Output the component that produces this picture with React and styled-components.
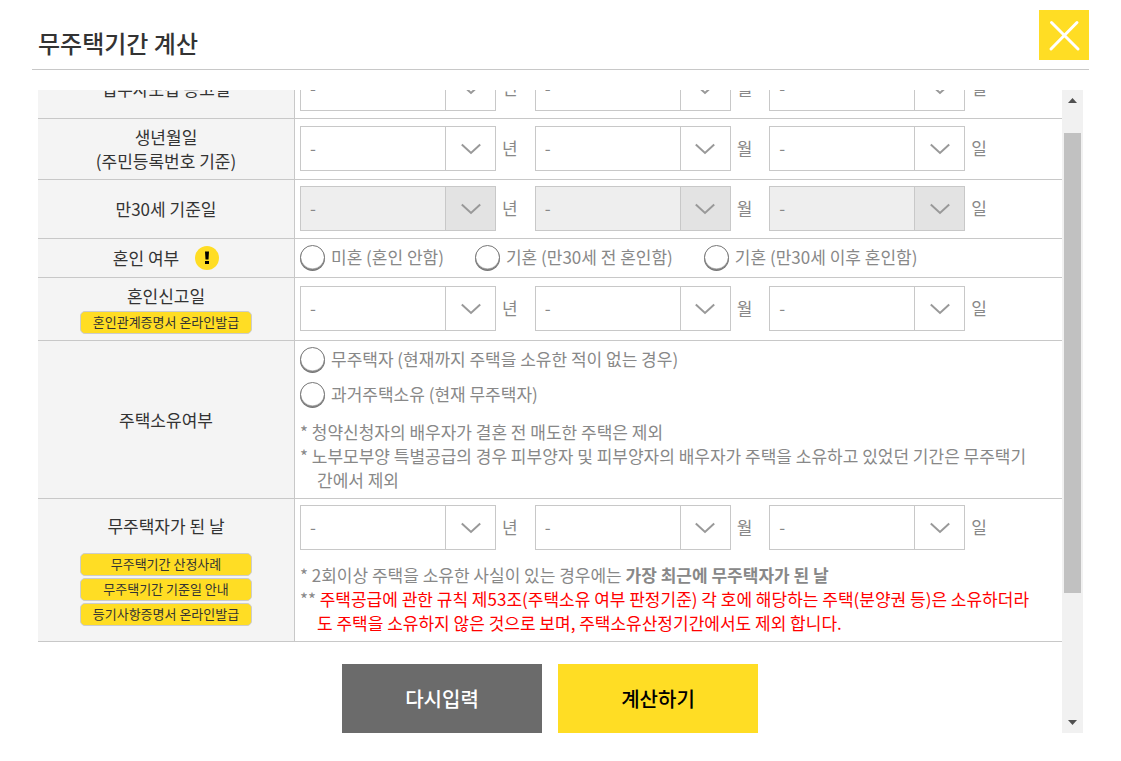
import React, { useLayoutEffect, useRef, useState } from 'react'
import styled, { createGlobalStyle, css } from 'styled-components'

const YELLOW = '#ffdd24'
const LINE = '#c8c8c8'
const FONT = '"Noto Sans CJK KR", "Noto Sans", sans-serif'

const GlobalStyle = createGlobalStyle`
  * {
    box-sizing: border-box;
  }

  body {
    margin: 0;
    background: #fff;
    color: #888;
    font: 17px/24px ${FONT};
  }

  button, select, input {
    font-family: inherit;
  }
`

const Popup = styled.div`
  display: flex;
  flex-direction: column;
  height: 100vh;
  padding: 0 32px 28px;
`

const Header = styled.header`
  display: flex;
  align-items: center;
  justify-content: space-between;
  height: 70px;
  padding-left: 6px;
  border-bottom: 1px solid ${LINE};
`

const Title = styled.h1`
  margin: 16px 0 0;
  font-size: 24px;
  font-weight: 500;
  line-height: 32px;
  color: #333;
`

const CloseButton = styled.button`
  display: flex;
  width: 50px;
  height: 50px;
  padding: 0;
  border: 0;
  background: ${YELLOW};
  cursor: pointer;
`

const Body = styled.div`
  display: flex;
  flex: 1;
  min-height: 0;
  margin: 20px 6px 0;
`

const ScrollArea = styled.div`
  flex: 1;
  overflow-y: auto;
  scrollbar-width: none;
`

const Content = styled.form`
  padding-bottom: 166px;
`

const Table = styled.table`
  width: 100%;
  table-layout: fixed;
  border-spacing: 0;
  border-top: 1px solid ${LINE};
`

const LabelCell = styled.th`
  width: 257px;
  padding: 6px 5px;
  border-right: 1px solid ${LINE};
  border-bottom: 1px solid ${LINE};
  background: #f4f4f4;
  color: #333;
  font-weight: 400;
`

const LabelLine = styled.div`
  display: flex;
  align-items: center;
  justify-content: center;
  gap: 16px;
`

const Cell = styled.td`
  padding: 6px 5px;
  border-bottom: 1px solid ${LINE};
`

const DateRow = styled.div`
  display: flex;
  height: 46px;
`

const DateField = styled.label`
  display: flex;
  flex: 0 0 31%;
`

const Unit = styled.span`
  margin: 0 17px 0 6px;
  line-height: 44px;
`

const SelectBox = styled.span`
  display: grid;
  flex: 1;
  height: 45px;
`

const Select = styled.select`
  grid-area: 1 / 1;
  width: 100%;
  padding: 0 60px 2px 9px;
  border: 1px solid ${LINE};
  border-radius: 0;
  appearance: none;
  background: #fff;
  color: #888;
  font-size: 17px;

  &:disabled {
    background: #eee;
    opacity: 1;
  }
`

const Arrow = styled.span`
  grid-area: 1 / 1;
  z-index: 1;
  justify-self: end;
  display: flex;
  align-items: center;
  justify-content: center;
  width: 51px;
  border: 1px solid ${LINE};
  pointer-events: none;
  ${props => props.$disabled && css`
    background: #e3e3e3;
  `}
`

const RadioGroup = styled.div`
  display: flex;
  flex-direction: ${props => props.$vertical ? 'column' : 'row'};
  gap: ${props => props.$vertical ? '9px' : '31px'};
`

const RadioLabel = styled.label`
  display: flex;
  gap: 6px;
  height: 26px;
  white-space: nowrap;
`

const Radio = styled.input`
  width: 25px;
  height: 25px;
  margin: 0;
  border: 1px solid #777;
  border-radius: 50%;
  box-shadow: 0 1px 0 #777, inset 0 -1px 0 #ccc;
  appearance: none;
  background: #fff;

  &:checked {
    background: radial-gradient(${YELLOW} 50%, #fff 54%);
  }
`

const Notes = styled.ul`
  margin: 12px 0 0;
  padding: 0;
  list-style: none;
`

const Note = styled.li`
  padding: 0 17px;
  text-indent: -17px;
  word-break: break-all;
`

const Warning = styled.span`
  color: #f00;
`

const LinkList = styled.div`
  display: flex;
  flex-direction: column;
  align-items: center;
  gap: 2px;
  margin-top: ${props => props.$spaced ? '15px' : '3px'};
`

const SmallButton = styled.button`
  width: 172px;
  height: 23px;
  padding: 0 0 2px;
  border: 1px solid #ccc;
  border-radius: 5px;
  background: ${YELLOW};
  color: #333;
  font-size: 13px;
  line-height: 19px;
  cursor: pointer;
`

const InfoButton = styled.button`
  display: flex;
  width: 24px;
  height: 24px;
  padding: 0;
  border: 0;
  background: none;
  cursor: pointer;
`

const Actions = styled.div`
  display: flex;
  justify-content: center;
  gap: 16px;
  margin-top: 22px;
`

const ActionButton = styled.button`
  width: 200px;
  height: 69px;
  border: 0;
  background: #6b6b6b;
  color: #fff;
  font-size: 20px;
  font-weight: 500;
  cursor: pointer;

  ${props => props.$primary && css`
    background: ${YELLOW};
    color: #000;
  `}
`

const ScrollBar = styled.div`
  display: flex;
  flex-direction: column;
  width: 21px;
  background: #f1f1f1;
`

const ScrollButton = styled.button`
  display: flex;
  align-items: center;
  justify-content: center;
  height: 21px;
  padding: 0;
  border: 0;
  background: none;
`

const Track = styled.div`
  flex: 1;
  min-height: 0;
  padding: 0 2px;
  overflow: hidden;
`

const Thumb = styled.div`
  background: #c1c1c1;
`

const DateSelects = ({ name, disabled }) => (
  <DateRow>
    {['년', '월', '일'].map(unit => (
      <DateField key={unit}>
        <SelectBox>
          <Select name={`${name}-${unit}`} disabled={disabled}>
            <option>-</option>
          </Select>
          <Arrow $disabled={disabled}>
            <svg width='20' height='12' viewBox='0 0 20 12' fill='none' stroke='#999' strokeWidth='2'>
              <path d='M0.8 1.5L10 10L19.2 1.5' />
            </svg>
          </Arrow>
        </SelectBox>
        <Unit>{unit}</Unit>
      </DateField>
    ))}
  </DateRow>
)

const Radios = ({ name, options, vertical }) => (
  <RadioGroup $vertical={vertical}>
    {options.map(option => (
      <RadioLabel key={option}>
        <Radio type='radio' name={name} value={option} />
        {option}
      </RadioLabel>
    ))}
  </RadioGroup>
)

const App = () => {
  const area = useRef(null)
  const [scroll, setScroll] = useState({ size: 0, offset: 0 })

  const updateScroll = () => {
    const { scrollTop, scrollHeight, clientHeight } = area.current
    setScroll({
      size: clientHeight / scrollHeight * 100,
      offset: scrollTop / scrollHeight * (clientHeight - 42)
    })
  }

  const scrollBy = amount => {
    area.current.scrollTop += amount
  }

  useLayoutEffect(() => {
    area.current.scrollTop = 31
    updateScroll()
  }, [])

  return (
    <Popup>
      <GlobalStyle />
      <Header>
        <Title>무주택기간 계산</Title>
        <CloseButton type='button' aria-label='닫기'>
          <svg width='50' height='50' viewBox='0 0 50 50' stroke='#fff' strokeWidth='3' strokeLinecap='round'>
            <path d='M12.5 12.5L39 39M38 12.5L12 39' />
          </svg>
        </CloseButton>
      </Header>
      <Body>
        <ScrollArea ref={area} onScroll={updateScroll}>
          <Content onSubmit={e => e.preventDefault()}>
            <Table>
              <tbody>
                <tr>
                  <LabelCell scope='row'>입주자모집 공고일</LabelCell>
                  <Cell><DateSelects name='notice' /></Cell>
                </tr>
                <tr>
                  <LabelCell scope='row'>생년월일<br />(주민등록번호 기준)</LabelCell>
                  <Cell><DateSelects name='birth' /></Cell>
                </tr>
                <tr>
                  <LabelCell scope='row'>만30세 기준일</LabelCell>
                  <Cell><DateSelects name='age30' disabled /></Cell>
                </tr>
                <tr>
                  <LabelCell scope='row'>
                    <LabelLine>
                      혼인 여부
                      <InfoButton type='button' aria-label='안내'>
                        <svg width='24' height='24' viewBox='0 0 24 24'>
                          <circle cx='12' cy='12' r='12' fill={YELLOW} />
                          <path d='M10 5.5h4l-.5 8h-3zM10 15h4v3h-4z' />
                        </svg>
                      </InfoButton>
                    </LabelLine>
                  </LabelCell>
                  <Cell>
                    <Radios
                      name='marriage'
                      options={['미혼 (혼인 안함)', '기혼 (만30세 전 혼인함)', '기혼 (만30세 이후 혼인함)']}
                    />
                  </Cell>
                </tr>
                <tr>
                  <LabelCell scope='row'>
                    혼인신고일
                    <LinkList>
                      <SmallButton type='button'>혼인관계증명서 온라인발급</SmallButton>
                    </LinkList>
                  </LabelCell>
                  <Cell><DateSelects name='wedding' /></Cell>
                </tr>
                <tr>
                  <LabelCell scope='row'>주택소유여부</LabelCell>
                  <Cell>
                    <Radios
                      vertical
                      name='house'
                      options={['무주택자 (현재까지 주택을 소유한 적이 없는 경우)', '과거주택소유 (현재 무주택자)']}
                    />
                    <Notes>
                      <Note>* 청약신청자의 배우자가 결혼 전 매도한 주택은 제외</Note>
                      <Note>* 노부모부양 특별공급의 경우 피부양자 및 피부양자의 배우자가 주택을 소유하고 있었던 기간은 무주택기간에서 제외</Note>
                    </Notes>
                  </Cell>
                </tr>
                <tr>
                  <LabelCell scope='row'>
                    무주택자가 된 날
                    <LinkList $spaced>
                      <SmallButton type='button'>무주택기간 산정사례</SmallButton>
                      <SmallButton type='button'>무주택기간 기준일 안내</SmallButton>
                      <SmallButton type='button'>등기사항증명서 온라인발급</SmallButton>
                    </LinkList>
                  </LabelCell>
                  <Cell>
                    <DateSelects name='homeless' />
                    <Notes>
                      <Note>* 2회이상 주택을 소유한 사실이 있는 경우에는 <b>가장 최근에 무주택자가 된 날</b></Note>
                      <Note>
                        ** <Warning>주택공급에 관한 규칙 제53조(주택소유 여부 판정기준) 각 호에 해당하는 주택(분양권 등)은 소유하더라도 주택을 소유하지 않은 것으로 보며, 주택소유산정기간에서도 제외 합니다.</Warning>
                      </Note>
                    </Notes>
                  </Cell>
                </tr>
              </tbody>
            </Table>
            <Actions>
              <ActionButton type='reset'>다시입력</ActionButton>
              <ActionButton type='submit' $primary>계산하기</ActionButton>
            </Actions>
          </Content>
        </ScrollArea>
        <ScrollBar>
          <ScrollButton type='button' aria-label='위로' onClick={() => scrollBy(-40)}>
            <svg width='9' height='5' viewBox='0 0 9 5' fill='#505050'><path d='M0 5L4.5 0L9 5z' /></svg>
          </ScrollButton>
          <Track>
            <Thumb style={{ height: `${scroll.size}%`, marginTop: scroll.offset }} />
          </Track>
          <ScrollButton type='button' aria-label='아래로' onClick={() => scrollBy(40)}>
            <svg width='9' height='5' viewBox='0 0 9 5' fill='#505050'><path d='M0 0L4.5 5L9 0z' /></svg>
          </ScrollButton>
        </ScrollBar>
      </Body>
    </Popup>
  )
}

export default App
